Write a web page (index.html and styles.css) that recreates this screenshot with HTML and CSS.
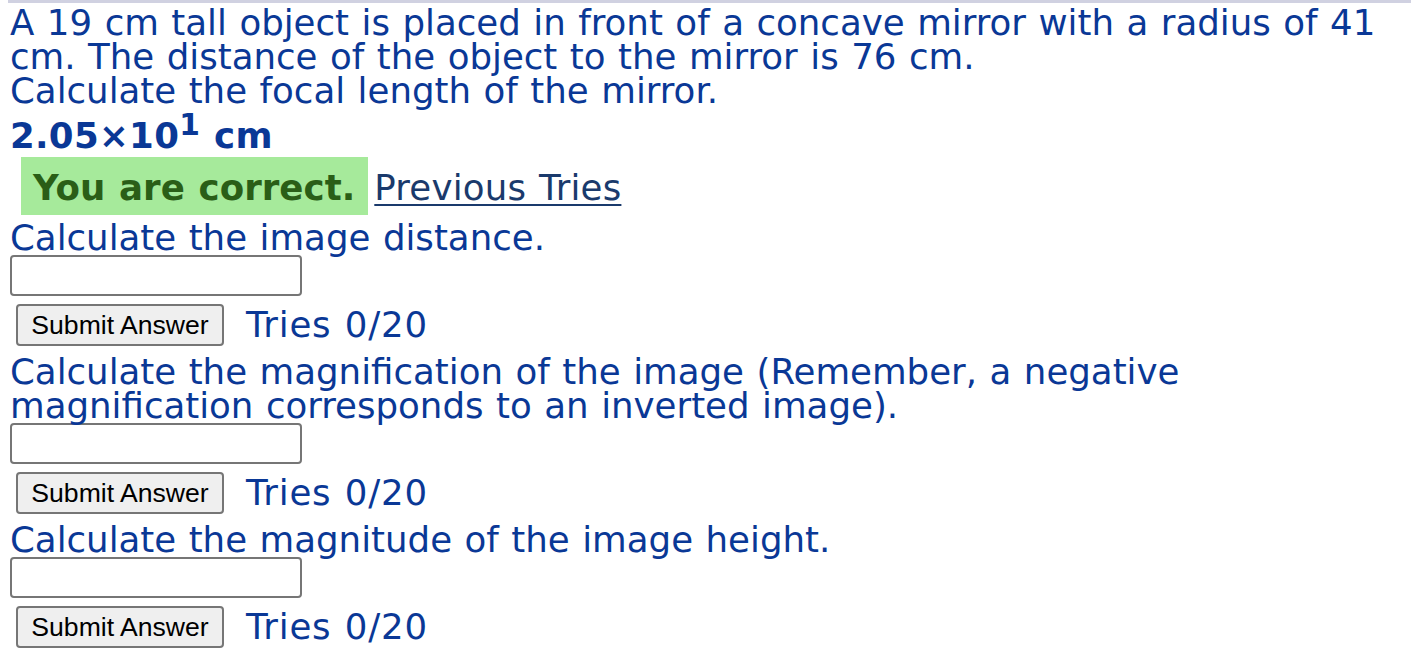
FILE: index.html
```html
<!DOCTYPE html>
<html lang="en">
<head>
<meta charset="utf-8">
<title>Concave mirror problem</title>
<link rel="stylesheet" href="styles.css">
</head>
<body>
<div class="topline"></div>
<div class="page">
  <p class="text">A 19 cm tall object is placed in front of a concave mirror with a radius of 41 cm. The distance of the object to the mirror is 76 cm.<br>Calculate the focal length of the mirror.</p>
  <div class="answer">2.05×10<sup>1</sup> cm</div>
  <div class="result">
    <span class="correct">You are correct.</span>
    <a href="#" class="prev">Previous Tries</a>
  </div>

  <div class="question first">
    <p class="text">Calculate the image distance.</p>
    <input class="entry" type="text">
    <div class="submit-row">
      <button class="submit" type="button">Submit Answer</button>
      <span class="tries">Tries 0/20</span>
    </div>
  </div>

  <div class="question">
    <p class="text">Calculate the magnification of the image (Remember, a negative magnification corresponds to an inverted image).</p>
    <input class="entry" type="text">
    <div class="submit-row">
      <button class="submit" type="button">Submit Answer</button>
      <span class="tries">Tries 0/20</span>
    </div>
  </div>

  <div class="question">
    <p class="text">Calculate the magnitude of the image height.</p>
    <input class="entry" type="text">
    <div class="submit-row">
      <button class="submit" type="button">Submit Answer</button>
      <span class="tries">Tries 0/20</span>
    </div>
  </div>
</div>
</body>
</html>
```

FILE: styles.css
```css
html, body {
  margin: 0;
  padding: 0;
  background: #ffffff;
}

body {
  font-family: "DejaVu Sans", Verdana, sans-serif;
  font-size: 35.6px;
  line-height: 34px;
  word-spacing: 1.2px;
  color: #0a3896;
}

.topline {
  height: 3px;
  margin: 0 14px 0 8px;
  background: #d0d1e1;
}

.page {
  width: 1401px;
  margin-left: 10px;
  padding-top: 3px;
}

.text {
  margin: 0;
}

.intro {
  margin: 0;
}

.answer {
  margin-top: 11px;
  font-weight: bold;
  letter-spacing: 0.3px;
}

.answer sup {
  line-height: 0;
}

.result {
  margin-top: 4px;
  display: flex;
  align-items: baseline;
  gap: 6px;
}

.correct {
  margin-left: 11px;
  height: 58px;
  box-sizing: border-box;
  padding: 3px 13px 0 12px;
  line-height: 55px;
  background: #a6ea9b;
  color: #2a5e17;
  font-weight: bold;
  letter-spacing: 0.05px;
}

.prev {
  color: #1a3a6c;
  letter-spacing: 0.2px;
  text-decoration: underline;
  text-underline-offset: 4px;
  text-decoration-thickness: 2px;
}

.question {
  margin-top: 9px;
}

.question.first {
  margin-top: 6px;
}

.entry {
  display: block;
  box-sizing: border-box;
  width: 292px;
  height: 41px;
  margin: 0;
  border: 2px solid #767676;
  border-radius: 4px;
  background: #ffffff;
}

.submit-row {
  margin-top: 8px;
  display: flex;
  align-items: center;
  height: 42px;
}

.submit {
  margin: 0 0 0 6px;
  box-sizing: border-box;
  width: 208px;
  height: 42px;
  padding: 0 10px;
  font-family: "Liberation Sans", Arial, sans-serif;
  font-size: 26.6px;
  word-spacing: normal;
  color: #000000;
  background: #efefef;
  border: 2px solid #767676;
  border-radius: 4px;
}

.tries {
  margin-left: 22px;
  letter-spacing: 0.8px;
}
```
